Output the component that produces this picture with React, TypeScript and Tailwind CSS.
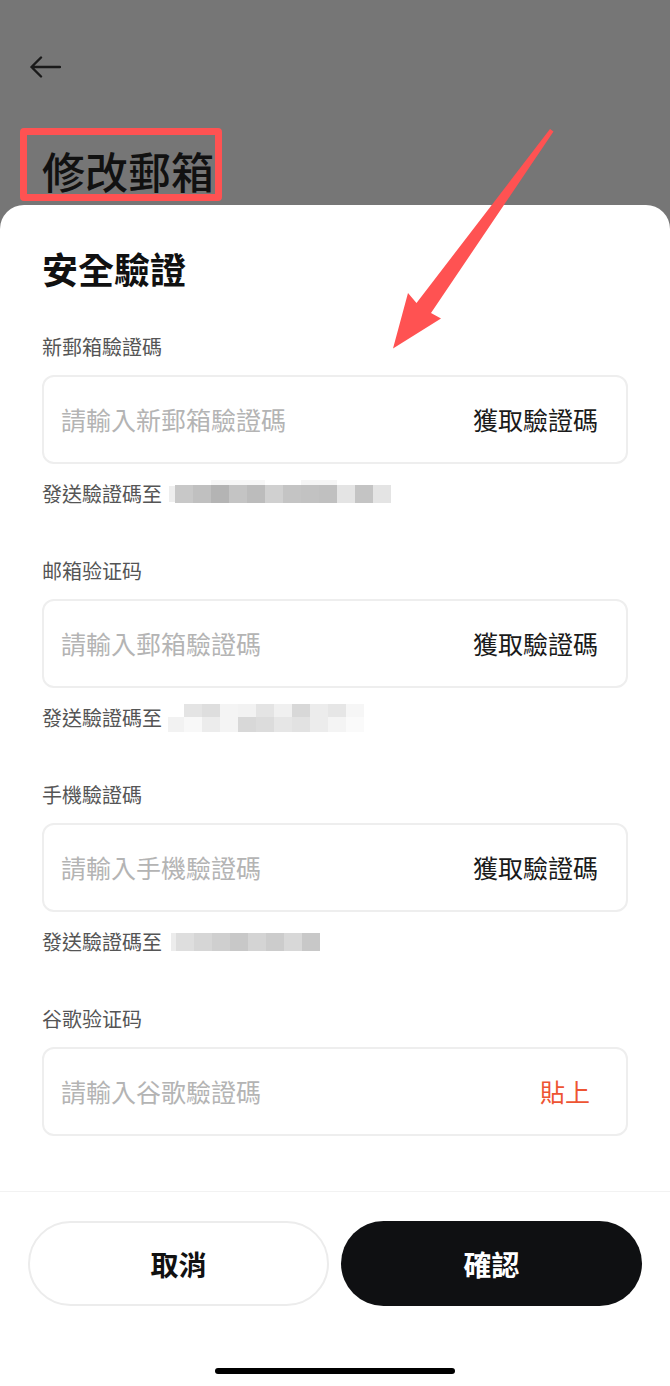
import { useState } from "react";

type Block = { x: number; y: number; w: number; h: number; c: string };

// mosaic rows that hide the address, one array per field
const row = (x0: number, y: number, h: number, colors: string[]): Block[] =>
    colors.map((c, i) => ({ x: x0 + i * 18, y, w: 18, h, c }));

const blurOne: Block[] = [
    { x: 7, y: 6, w: 6, h: 16, c: "#eeeeee" },
    ...row(49, 0, 5, ["#f7f7f7", "#f7f7f7", "#f7f7f7"]),
    ...row(139, 0, 5, ["#f5f5f5", "#f5f5f5"]),
    ...row(13, 5, 18, ["#c8c8c8", "#c0c0c0", "#b4b4b4", "#c4c4c4", "#bcbcbc", "#d0d0d0", "#c4c4c4", "#c2c2c2", "#c0c0c0", "#e4e4e4", "#c4c4c4", "#e4e4e4"]),
];

const blurTwo: Block[] = [
    ...row(22, 0, 13, ["#e4e4e4", "#dedede", "#f4f4f4", "#f2f2f2", "#e4e4e4", "#f0f0f0", "#d8d8d8", "#ececec", "#e6e6e6", "#f6f6f6"]),
    { x: 6, y: 13, w: 16, h: 15, c: "#f2f2f2" },
    ...row(22, 13, 15, ["#f8f8f8", "#ececec", "#f4f4f4", "#d8d8d8", "#dcdcdc", "#e6e6e6", "#e2e2e2", "#ececec", "#f4f4f4", "#fafafa"]),
];

const blurThree: Block[] = [
    { x: 9, y: 5, w: 5, h: 18, c: "#ececec" },
    ...row(14, 5, 18, ["#dedede", "#d6d6d6", "#cfcfcf", "#c8c8c8", "#d4d4d4", "#cccccc", "#d8d8d8", "#c8c8c8"]),
];

function Mosaic({ blocks }: { blocks: Block[] }) {
    return (
        <svg width="240" height="28" viewBox="0 0 240 28" className="block">
            {blocks.map((b, i) => (
                <rect key={i} x={b.x} y={b.y} width={b.w} height={b.h} fill={b.c} />
            ))}
        </svg>
    );
}

const fields = [
    { label: "新郵箱驗證碼", placeholder: "請輸入新郵箱驗證碼", action: "獲取驗證碼", blur: blurOne },
    { label: "邮箱验证码", placeholder: "請輸入郵箱驗證碼", action: "獲取驗證碼", blur: blurTwo },
    { label: "手機驗證碼", placeholder: "請輸入手機驗證碼", action: "獲取驗證碼", blur: blurThree },
    { label: "谷歌验证码", placeholder: "請輸入谷歌驗證碼", action: "貼上", blur: null },
];

function CodeField({ label, placeholder, action, blur }: (typeof fields)[number]) {
    const [value, setValue] = useState("");
    const paste = action === "貼上";

    return (
        <div className="mt-[49px] first:mt-[43px]">
            <div className="text-[20px] leading-[28px] text-[#555555]">{label}</div>
            <div className="mt-[14px] h-[89px] flex items-center rounded-[12px] border-2 border-[#eeeeee] pl-[17px] pr-[28px]">
                <input
                    value={value}
                    onChange={(e) => setValue(e.target.value)}
                    placeholder={placeholder}
                    className="flex-1 min-w-0 bg-transparent outline-none text-[25px] text-[#1a1a1a] placeholder:text-[#b4b4b4]"
                />
                <button
                    className={
                        paste
                            ? "mr-[8px] text-[25px] text-[#ee5432]"
                            : "text-[25px] text-[#1a1a1a]"
                    }
                >
                    {action}
                </button>
            </div>
            {blur && (
                <div className="mt-[16px] flex items-center text-[20px] leading-[28px] text-[#555555]">
                    <span>發送驗證碼至</span>
                    <Mosaic blocks={blur} />
                </div>
            )}
        </div>
    );
}

export default function App() {
    return (
        <div className="relative h-[1386px] w-[670px] overflow-hidden bg-[#767676] flex flex-col font-['Noto_Sans_CJK_TC','Noto_Sans',sans-serif]">
            {/* page header behind the sheet */}
            <div className="h-[205px] shrink-0 flex flex-col items-start">
                <svg width="32" height="22" viewBox="0 0 32 22" className="mt-[56px] ml-[29px]" fill="none">
                    <path d="M31 11H2.5M12 1.5L2.5 11L12 20.5" stroke="#1a1a1a" strokeWidth="2.4" strokeLinecap="round" strokeLinejoin="round" />
                </svg>
                <div className="mt-[50px] ml-[20px] rounded-[4px] border-[7px] border-[#ff5252] pl-[15px] pr-[1px] pt-[13px] pb-[1px]">
                    <h1 className="text-[43px] leading-[45px] font-medium text-[#111111]">修改郵箱</h1>
                </div>
            </div>

            {/* bottom sheet */}
            <div className="flex-1 flex flex-col bg-white rounded-t-[24px]">
                <div className="flex-1 px-[42px] pt-[41px]">
                    <h2 className="text-[36px] leading-[44px] font-bold text-[#111111]">安全驗證</h2>
                    <div className="flex flex-col">
                        {fields.map((f) => (
                            <CodeField key={f.label} {...f} />
                        ))}
                    </div>
                </div>

                <div className="border-t border-[#f2f2f2] pt-[29px] pb-[12px] flex flex-col items-center">
                    <div className="w-full px-[28px] grid grid-cols-2 gap-[12px]">
                        <button className="h-[85px] rounded-full border-2 border-[#ececec] bg-white text-[28px] font-bold text-[#111111]">
                            取消
                        </button>
                        <button className="h-[85px] rounded-full bg-[#0f1012] text-[28px] font-bold text-white">
                            確認
                        </button>
                    </div>
                    <div className="mt-[62px] h-[6px] w-[240px] rounded-full bg-black" />
                </div>
            </div>

            {/* red annotation arrow drawn over the screen */}
            <svg className="absolute inset-0 pointer-events-none" width="670" height="1386" viewBox="0 0 670 1386">
                <polygon
                    points="550,129 553.5,131.5 431,313 441,318.5 393,348.5 408,293 416.5,303"
                    fill="#ff5252"
                />
            </svg>
        </div>
    );
}
